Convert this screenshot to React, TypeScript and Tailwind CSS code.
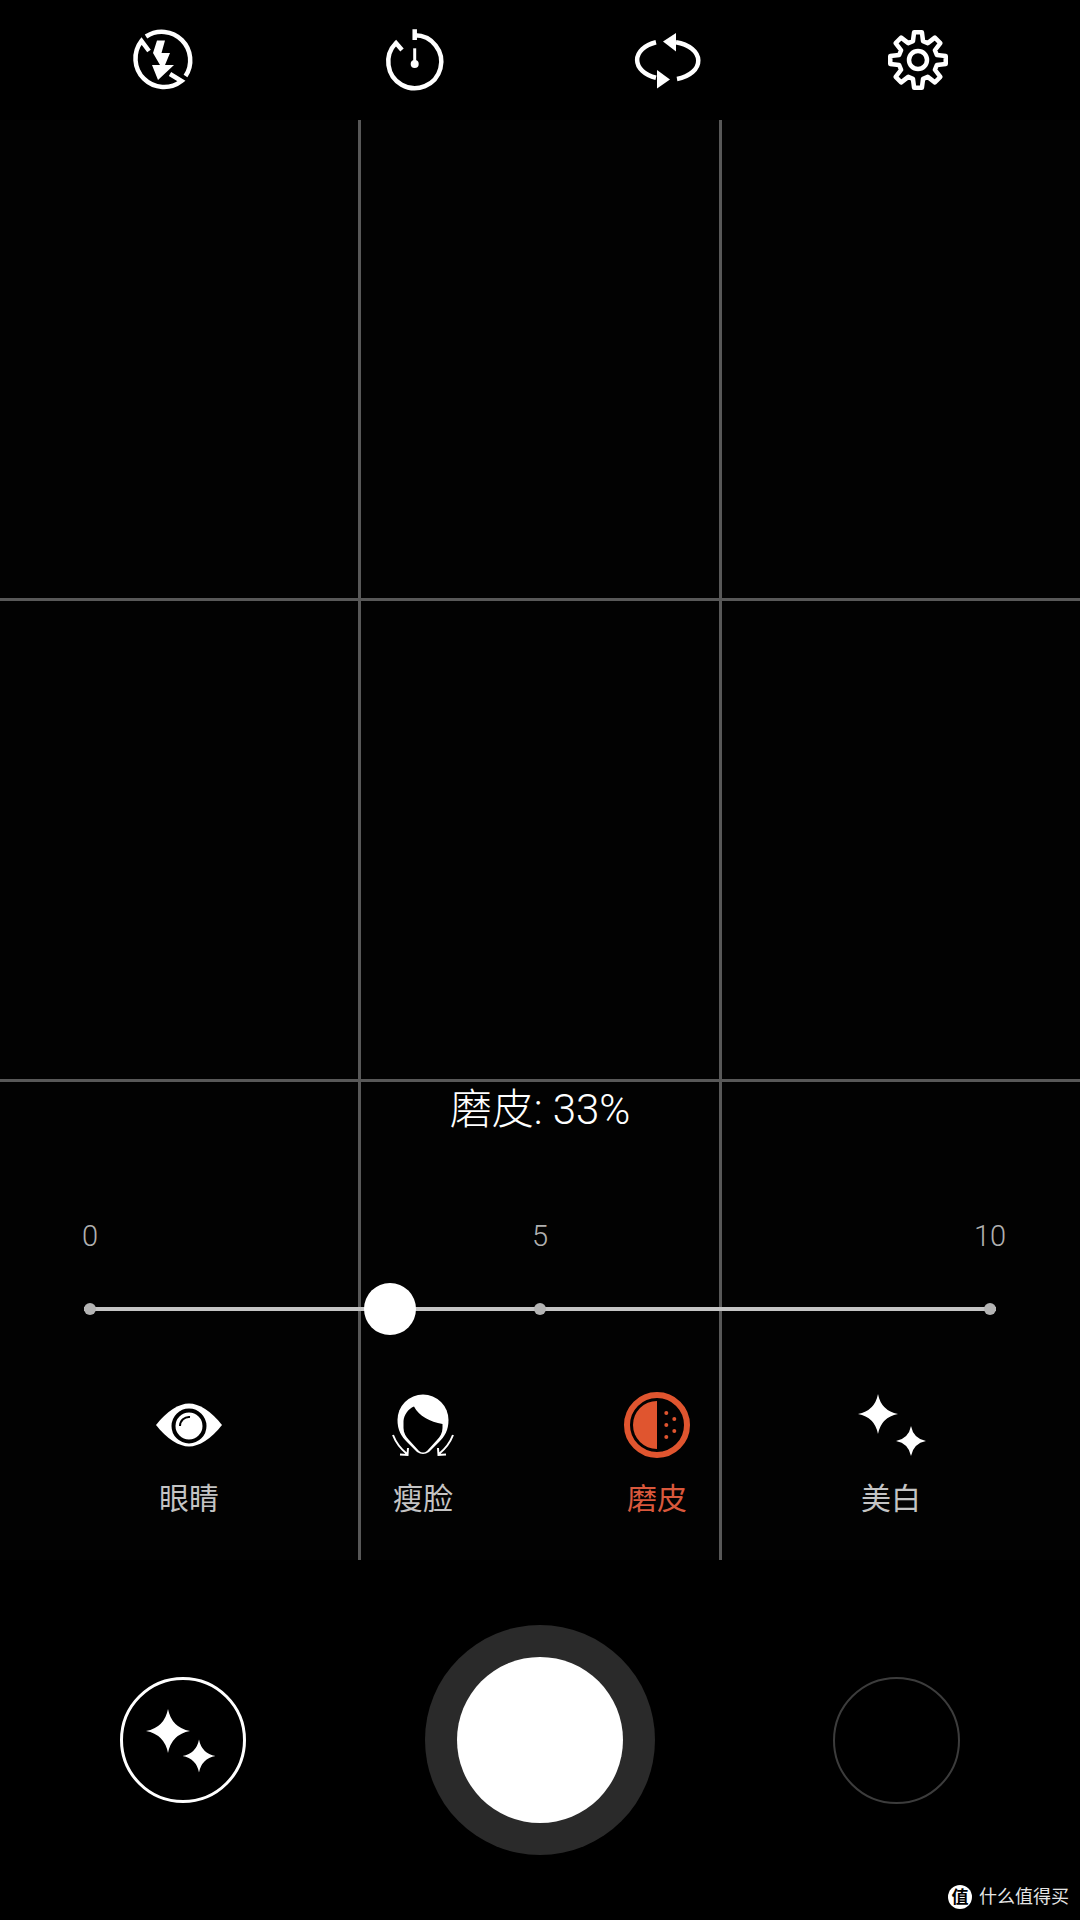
import React from 'react';

const FONT = "font-['Roboto','Noto_Sans_CJK_SC',sans-serif]";

// four pointed star with concave sides
const starPath = (cx: number, cy: number, r: number) => {
  const c = r * 0.16;
  return `M${cx} ${cy - r}Q${cx + c} ${cy - c} ${cx + r} ${cy}Q${cx + c} ${cy + c} ${cx} ${cy + r}Q${cx - c} ${cy + c} ${cx - r} ${cy}Q${cx - c} ${cy - c} ${cx} ${cy - r}Z`;
};

const gearPath = () => {
  const pts: string[] = [];
  for (let i = 0; i < 8; i++) {
    const a = (i * 45 * Math.PI) / 180 - Math.PI / 2;
    const at = (r: number, d: number) => {
      const t = a + (d * Math.PI) / 180;
      return `${(r * Math.cos(t)).toFixed(2)} ${(r * Math.sin(t)).toFixed(2)}`;
    };
    pts.push(at(19.5, -15), at(28, -8), at(28, 8), at(19.5, 15));
  }
  return 'M' + pts.join('L') + 'Z';
};

const Icon: React.FC<{ size?: number; children: React.ReactNode }> = ({ size = 64, children }) => (
  <svg width={size} height={size} viewBox={`${-size / 2} ${-size / 2} ${size} ${size}`} className="block overflow-visible">
    {children}
  </svg>
);

const FlashIcon = () => (
  <Icon>
    <g fill="none" stroke="#fff" strokeWidth="4.5">
      <path d="M-16 -23.5A28.5 28.5 0 0 1 23.5 16" />
      <path d="M-13 -9L-20.5 -19A28.5 28.5 0 0 0 19.5 21L8 14" />
    </g>
    <path
      fill="#fff"
      d="M-5 -19.5H3L-.5 -7H8L3 5H12L-4 20L-10 5H-2L-9 -7Z"
    />
  </Icon>
);

const TimerIcon = () => (
  <Icon>
    <g fill="none" stroke="#fff" strokeWidth="4.5">
      <path d="M.7 -30.7V-20M.7 -24.8A26.5 26.5 0 1 1 -18 -17L-12 -10" />
      <path d="M.7 -11.7V4" strokeWidth="3" />
    </g>
    <circle cx=".7" cy="4" r="4" fill="#fff" />
  </Icon>
);

const SwitchIcon = () => (
  <Icon>
    <g fill="none" stroke="#fff" strokeWidth="4.5">
      <path d="M-10 -17.8A29 19 0 0 0 -10 17.8" />
      <path d="M10 -17.8A29 19 0 0 1 11 19" />
    </g>
    <path fill="#fff" d="M-3 -18.5L10 -27V-8.5Z" />
    <path fill="#fff" d="M4 19.5L-9 10V28.5Z" />
  </Icon>
);

const GearIcon = () => (
  <Icon>
    <path d={gearPath()} fill="none" stroke="#fff" strokeWidth="4.5" strokeLinejoin="round" />
    <circle cx="0" cy="0" r="9" fill="none" stroke="#fff" strokeWidth="4.5" />
  </Icon>
);

const EyeIcon = () => (
  <Icon>
    <path fill="#fff" d="M-33 0C-22 -14 -10 -21.5 0 -21.5S22 -14 33 0C22 14 10 21.5 0 21.5S-22 14 -33 0Z" />
    <circle cx="0" cy="1" r="15.5" fill="#fff" stroke="#000" strokeWidth="4" />
    <path d="M-9 1A9 9 0 0 1 1 -8" fill="none" stroke="#000" strokeWidth="2" />
  </Icon>
);

const FaceIcon = () => (
  <Icon>
    <path
      fill="#fff"
      d="M-25.5 -5A25.5 25.5 0 0 1 25.5 -5C25.5 5 22 11 16 17L6 27Q0 31 -6 27L-16 17C-22 11 -25.5 5 -25.5 -5Z"
    />
    <path
      fill="#000"
      d="M-9 -18.5C-4 -9 7 -3 19.5 -1L19.5 3C19.5 8 17 12 14 15L4 26Q0 29 -4 26L-14 15C-17 12 -19.5 8 -19.5 3L-19.5 -4C-19 -10 -15 -16 -9 -18.5Z"
    />
    <g fill="none" stroke="#fff" strokeWidth="2">
      <path d="M-30 10C-27 18 -22 24 -16 29M-23 29.5L-15.5 30L-15 23" />
      <path d="M30 10C27 18 22 24 16 29M23 29.5L15.5 30L15 23" />
    </g>
  </Icon>
);

const SkinIcon = () => (
  <Icon>
    <circle cx="0" cy="0" r="30" fill="none" stroke="#e0552f" strokeWidth="6" />
    <path fill="#e0552f" d="M0 -24A24 24 0 0 0 0 24Z" />
    {[[9.3, -12], [17.3, -6], [9.3, 0], [17.3, 6], [9.3, 12]].map(([x, y]) => (
      <circle key={`${x}-${y}`} cx={x} cy={y} r="2" fill="#e0552f" />
    ))}
  </Icon>
);

const SparkleIcon = () => (
  <Icon>
    <path fill="#fff" d={starPath(-13, -11, 20)} />
    <path fill="#fff" d={starPath(20, 16, 15)} />
  </Icon>
);

const tools = [
  { label: '眼睛', icon: <EyeIcon />, active: false },
  { label: '瘦脸', icon: <FaceIcon />, active: false },
  { label: '磨皮', icon: <SkinIcon />, active: true },
  { label: '美白', icon: <SparkleIcon />, active: false },
];

export default function App() {
  return (
    <div className={`relative flex flex-col w-[1080px] h-[1920px] bg-black text-white overflow-hidden ${FONT}`}>
      {/* top bar */}
      <div className="flex items-center h-[120px] px-[36px]">
        <div className="flex justify-center w-[252px]"><FlashIcon /></div>
        <div className="flex justify-center w-[252px]"><TimerIcon /></div>
        <div className="flex justify-center w-[252px]"><SwitchIcon /></div>
        <div className="flex justify-center w-[252px]"><GearIcon /></div>
      </div>

      {/* viewfinder */}
      <div className="relative flex flex-col justify-end h-[1440px] pb-[43px] bg-[#020202]">
        <div className="absolute left-[358px] top-0 bottom-0 w-[3px] bg-[#585858]" />
        <div className="absolute left-[719px] top-0 bottom-0 w-[3px] bg-[#585858]" />
        <div className="absolute left-0 right-0 top-[478px] h-[3px] bg-[#585858]" />
        <div className="absolute left-0 right-0 top-[959px] h-[3px] bg-[#585858]" />

        <div className="relative text-center text-[42px] leading-[48px] font-light mb-[84px]">磨皮: 33%</div>

        <div className="relative flex justify-between px-[60px] text-[29px] leading-[36px] font-light text-[#b0b0b0] mb-[49px]">
          <span className="w-[60px] text-center">0</span>
          <span className="w-[60px] text-center">5</span>
          <span className="w-[60px] text-center">10</span>
        </div>

        <div className="relative flex items-center justify-between mx-[84px] h-[12px] mb-[78px]">
          <div className="absolute left-0 right-0 top-[4px] h-[4px] bg-[#c4c4c4]" />
          <div className="relative w-[12px] h-[12px] rounded-full bg-[#b4b4b4]" />
          <div className="relative w-[12px] h-[12px] rounded-full bg-[#b4b4b4]" />
          <div className="relative w-[12px] h-[12px] rounded-full bg-[#b4b4b4]" />
          <div className="absolute left-[280px] top-[-20px] w-[52px] h-[52px] rounded-full bg-white" />
        </div>

        <div className="relative flex px-[72px]">
          {tools.map(t => (
            <div key={t.label} className="flex flex-col items-center w-[234px]">
              {t.icon}
              <span className={`mt-[24px] text-[30px] leading-[36px] ${t.active ? 'text-[#d9583c]' : 'text-[#c4c4c4]'}`}>{t.label}</span>
            </div>
          ))}
        </div>
      </div>

      {/* shutter row */}
      <div className="flex flex-1 items-center justify-between px-[120px]">
        <div className="flex items-center justify-center w-[126px] h-[126px] rounded-full border-[3px] border-white">
          <svg width="120" height="120" viewBox="-60 -60 120 120" className="block">
            <path fill="#fff" d={starPath(-15, -9, 22)} />
            <path fill="#fff" d={starPath(16, 16, 16.5)} />
          </svg>
        </div>
        <div className="flex items-center justify-center w-[230px] h-[230px] rounded-full bg-[#2a2a2a]">
          <div className="w-[166px] h-[166px] rounded-full bg-white" />
        </div>
        <div className="w-[127px] h-[127px] rounded-full border-2 border-[#3c3c3c]" />
      </div>

      {/* watermark */}
      <div className="absolute right-[11px] bottom-[11px] flex items-center gap-[7px] text-[18px] leading-[24px] text-[#e4e4e4]">
        <span className="flex items-center justify-center w-[24px] h-[24px] rounded-full bg-white text-black text-[17px] font-bold">值</span>
        <span>什么值得买</span>
      </div>
    </div>
  );
}
